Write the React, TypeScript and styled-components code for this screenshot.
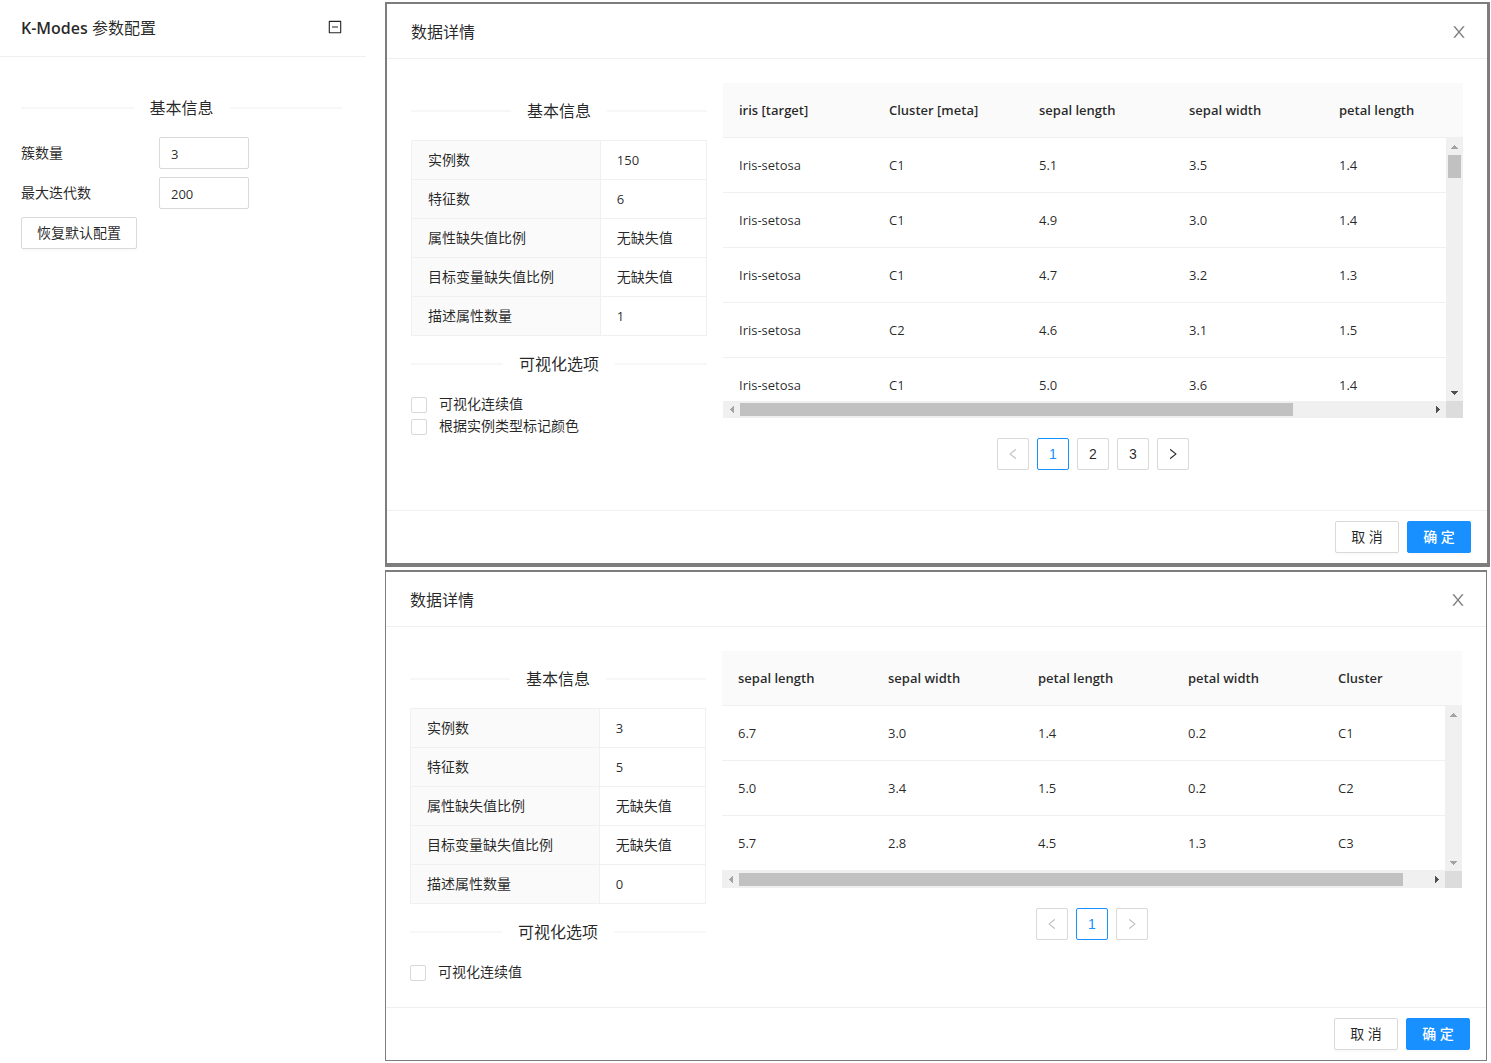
import React from 'react';
import styled, { createGlobalStyle } from 'styled-components';

const sans = '"Open Sans", "Noto Sans CJK SC", sans-serif';
const line = '#f0f0f0';
const control = '#d9d9d9';
const ink = 'rgba(0, 0, 0, 0.85)';
const primary = '#1890ff';

const GlobalStyle = createGlobalStyle`
  *, *::before, *::after { box-sizing: border-box; }
  body {
    margin: 0;
    background: #fff;
    color: ${ink};
    font: 14px/22px ${sans};
  }
  button, input { font: inherit; color: inherit; }
`;

const Page = styled.div`
  display: flex;
  align-items: flex-start;
  gap: 19px;
`;

/* ---------- shared parts ---------- */

const Divider = styled.h3`
  display: flex;
  align-items: center;
  gap: 16px;
  margin: 16px 0 17px;
  font-size: 16px;
  font-weight: 400;
  line-height: 24px;
  white-space: nowrap;
  &::before, &::after {
    content: '';
    flex: 1;
    height: 2px;
    background: #f7f7f7;
  }
`;

const Button = styled.button<{ $primary?: boolean }>`
  height: 32px;
  padding: 0 15px;
  border: 1px solid ${p => (p.$primary ? primary : control)};
  border-radius: 2px;
  background: ${p => (p.$primary ? primary : '#fff')};
  color: ${p => (p.$primary ? '#fff' : ink)};
  font-weight: ${p => (p.$primary ? 500 : 400)};
  line-height: 22px;
  box-shadow: 0 2px 0 rgba(0, 0, 0, 0.02);
  cursor: pointer;
`;

const IconButton = styled.button`
  display: flex;
  align-items: center;
  justify-content: center;
  height: 22px;
  padding: 0;
  border: 0;
  background: none;
  cursor: pointer;
`;

const Icon = ({ size, paths }: { size: number; paths: string[] }) => (
  <svg width={size} height={size} viewBox="0 0 1024 1024" fill="currentColor" aria-hidden="true">
    {paths.map(d => <path key={d} d={d} />)}
  </svg>
);

const closeIcon = ['M563.8 512l262.5-312.9c4.4-5.2.7-13.1-6.1-13.1h-79.8c-4.7 0-9.2 2.1-12.3 5.7L511.6 449.8 295.1 191.7c-3-3.6-7.5-5.7-12.3-5.7H203c-6.8 0-10.5 7.9-6.1 13.1L459.4 512 196.9 824.9A7.95 7.95 0 00203 838h79.8c4.7 0 9.2-2.1 12.3-5.7l216.5-258.1 216.5 258.1c3 3.6 7.5 5.7 12.3 5.7h79.8c6.8 0 10.5-7.9 6.1-13.1L563.8 512z'];
const leftIcon = ['M724 218.3V141c0-6.7-7.7-10.4-12.9-6.3L260.3 486.8a31.86 31.86 0 000 50.3l450.8 352.1c5.3 4.1 12.9.4 12.9-6.3v-77.3c0-4.9-2.3-9.6-6.1-12.6l-360-281 360-281.1c3.8-3 6.1-7.7 6.1-12.6z'];
const rightIcon = ['M765.7 486.8L314.9 134.7A7.97 7.97 0 00302 141v77.3c0 4.9 2.3 9.6 6.1 12.6l360 281.1-360 281.1c-3.9 3-6.1 7.7-6.1 12.6V883c0 6.7 7.7 10.4 12.9 6.3l450.8-352.1a31.96 31.96 0 000-50.4z'];
const minusSquareIcon = [
  'M328 544h368c4.4 0 8-3.6 8-8v-48c0-4.4-3.6-8-8-8H328c-4.4 0-8 3.6-8 8v48c0 4.4 3.6 8 8 8z',
  'M880 112H144c-17.7 0-32 14.3-32 32v736c0 17.7 14.3 32 32 32h736c17.7 0 32-14.3 32-32V144c0-17.7-14.3-32-32-32zm-40 728H184V184h656v656z',
];

/* ---------- parameter panel ---------- */

const Panel = styled.aside`
  flex: none;
  width: 366px;
`;

const PanelHeader = styled.header`
  display: flex;
  align-items: flex-start;
  justify-content: space-between;
  padding: 16px 23px 16px 21px;
  border-bottom: 1px solid ${line};
`;

const PanelTitle = styled.h2`
  margin: 0;
  font-size: 16px;
  font-weight: 400;
  line-height: 24px;
`;

const TitleLatin = styled.span`
  font-weight: 600;
`;

const PanelBody = styled.div`
  padding: 23px 24px 24px 21px;
`;

const Form = styled.form`
  display: grid;
  gap: 8px;
  justify-items: start;
`;

const Field = styled.div`
  display: grid;
  grid-template-columns: 138px 90px;
  align-items: center;
`;

const Input = styled.input`
  width: 100%;
  height: 32px;
  padding: 5px 11px 3px;
  border: 1px solid ${control};
  border-radius: 2px;
  background: #fff;
  font-size: 13px;
`;

/* ---------- modal ---------- */

const Stack = styled.main`
  flex: 1;
  min-width: 0;
  display: flex;
  flex-direction: column;
  gap: 3px;
  padding: 2px 1px 2px 0;
`;

const Modal = styled.section<{ $frame: 'heavy' | 'light' }>`
  margin-right: ${p => (p.$frame === 'heavy' ? 0 : '3px')};
  border: solid #7d7d7d;
  border-width: ${p => (p.$frame === 'heavy' ? '2px 3px 4px 2px' : '2px 1px 1px 1px')};
  background: #fff;
`;

const ModalHeader = styled.header`
  display: flex;
  align-items: flex-start;
  justify-content: space-between;
  height: 55px;
  padding-left: 24px;
  border-bottom: 1px solid ${line};
`;

const ModalTitle = styled.h2`
  margin: 0;
  font-size: 16px;
  font-weight: 400;
  line-height: 56px;
`;

const CloseButton = styled(IconButton)`
  width: 56px;
  height: 56px;
  color: rgba(0, 0, 0, 0.5);
`;

const ModalBody = styled.div`
  display: grid;
  grid-template-columns: minmax(0, 2fr) minmax(0, 5fr);
  gap: 16px;
  align-items: start;
  padding: 24px;
`;

const ModalFooter = styled.footer`
  display: flex;
  justify-content: flex-end;
  gap: 8px;
  padding: 10px 16px;
  border-top: 1px solid ${line};
`;

const FooterButton = styled(Button)`
  width: 64px;
`;

const Facts = styled.table`
  width: 100%;
  table-layout: fixed;
  border-collapse: collapse;
  th, td {
    height: 39px;
    padding: 0 16px;
    border: 1px solid ${line};
    font-weight: 400;
    text-align: left;
  }
  th {
    width: 64%;
    background: #fafafa;
  }
`;

const Digits = styled.span`
  font-size: 13px;
`;

const Options = styled.div`
  display: grid;
`;

const Option = styled.label`
  display: flex;
  align-items: center;
  gap: 12px;
`;

const Checkbox = styled.input`
  appearance: none;
  width: 16px;
  height: 16px;
  margin: 2px 0 0;
  border: 1px solid ${control};
  border-radius: 2px;
  background: #fff;
  &:checked { background: ${primary}; border-color: ${primary}; }
`;

/* ---------- data grid ---------- */

const GridFrame = styled.div`
  display: grid;
  grid-template-columns: minmax(0, 1fr) 17px;
`;

const HeadView = styled.div`
  grid-column: 1 / -1;
  overflow: hidden;
  background: #fafafa;
  border-bottom: 1px solid ${line};
`;

const BodyView = styled.div<{ $maxHeight?: number }>`
  overflow: hidden;
  max-height: ${p => (p.$maxHeight ? `${p.$maxHeight}px` : 'none')};
`;

const DataTable = styled.table`
  width: 750px;
  table-layout: fixed;
  border-collapse: separate;
  border-spacing: 0;
  font-size: 13px;
  th, td {
    padding: 16px;
    text-align: left;
  }
  th { font-weight: 600; }
  td { border-bottom: 1px solid ${line}; }
`;

const Bar = styled.div<{ $vertical?: boolean }>`
  display: flex;
  flex-direction: ${p => (p.$vertical ? 'column' : 'row')};
  background: ${line};
`;

const Arrow = styled.button<{ $active?: boolean }>`
  flex: none;
  display: flex;
  align-items: center;
  justify-content: center;
  width: 17px;
  height: 17px;
  padding: 0;
  border: 0;
  background: none;
  color: ${p => (p.$active ? '#505050' : '#a3a3a3')};
`;

const Track = styled.div<{ $vertical?: boolean }>`
  flex: 1;
  padding: ${p => (p.$vertical ? '0 2px' : '2px 0')};
`;

const Thumb = styled.div<{ $vertical?: boolean; $size: number }>`
  width: ${p => (p.$vertical ? '13px' : `${p.$size}%`)};
  height: ${p => (p.$vertical ? `${p.$size}%` : '13px')};
  background: #c1c1c1;
`;

const Corner = styled.div`
  background: #dcdcdc;
`;

const tips = {
  up: '0,4 3.5,0 7,4',
  down: '0,0 7,0 3.5,4',
  left: '4,0 4,7 0,3.5',
  right: '0,0 4,3.5 0,7',
};

const Tip = ({ to }: { to: keyof typeof tips }) => {
  const upright = to === 'up' || to === 'down';
  return (
    <svg width={upright ? 7 : 4} height={upright ? 4 : 7} fill="currentColor" shapeRendering="crispEdges" aria-hidden="true">
      <polygon points={tips[to]} />
    </svg>
  );
};

const ScrollBar = ({ vertical, size }: { vertical?: boolean; size: number }) => (
  <Bar $vertical={vertical}>
    <Arrow type="button" aria-label={vertical ? '向上' : '向左'}><Tip to={vertical ? 'up' : 'left'} /></Arrow>
    <Track $vertical={vertical}>{size > 0 && <Thumb $vertical={vertical} $size={size} />}</Track>
    <Arrow type="button" $active={size > 0} aria-label={vertical ? '向下' : '向右'}><Tip to={vertical ? 'down' : 'right'} /></Arrow>
  </Bar>
);

/* ---------- pagination ---------- */

const Pager = styled.nav`
  display: flex;
  justify-content: center;
  gap: 8px;
  margin: 20px 0 16px;
`;

const PageButton = styled(IconButton)<{ $current?: boolean }>`
  width: 32px;
  height: 32px;
  border: 1px solid ${p => (p.$current ? primary : control)};
  border-radius: 2px;
  background: #fff;
  color: ${p => (p.$current ? primary : ink)};
  font: 14px/22px "Liberation Sans", sans-serif;
  &:disabled { color: rgba(0, 0, 0, 0.25); cursor: not-allowed; }
`;

const Pagination = ({ pages }: { pages: number }) => (
  <Pager aria-label="分页">
    <PageButton type="button" disabled aria-label="上一页"><Icon size={14} paths={leftIcon} /></PageButton>
    {Array.from({ length: pages }, (_, i) => (
      <PageButton type="button" key={i} $current={i === 0}>{i + 1}</PageButton>
    ))}
    <PageButton type="button" disabled={pages === 1} aria-label="下一页"><Icon size={14} paths={rightIcon} /></PageButton>
  </Pager>
);

/* ---------- data ---------- */

type Details = {
  frame: 'heavy' | 'light';
  facts: [string, string][];
  options: string[];
  columns: string[];
  rows: string[][];
  scrollY?: number;
  thumbX: number;
  thumbY: number;
  pages: number;
};

const instances: Details = {
  frame: 'heavy',
  facts: [['实例数', '150'], ['特征数', '6'], ['属性缺失值比例', '无缺失值'], ['目标变量缺失值比例', '无缺失值'], ['描述属性数量', '1']],
  options: ['可视化连续值', '根据实例类型标记颜色'],
  columns: ['iris [target]', 'Cluster [meta]', 'sepal length', 'sepal width', 'petal length'],
  rows: [
    ['Iris-setosa', 'C1', '5.1', '3.5', '1.4'],
    ['Iris-setosa', 'C1', '4.9', '3.0', '1.4'],
    ['Iris-setosa', 'C1', '4.7', '3.2', '1.3'],
    ['Iris-setosa', 'C2', '4.6', '3.1', '1.5'],
    ['Iris-setosa', 'C1', '5.0', '3.6', '1.4'],
  ],
  scrollY: 263,
  thumbX: (723 / 900) * 100,
  thumbY: 10,
  pages: 3,
};

const centroids: Details = {
  frame: 'light',
  facts: [['实例数', '3'], ['特征数', '5'], ['属性缺失值比例', '无缺失值'], ['目标变量缺失值比例', '无缺失值'], ['描述属性数量', '0']],
  options: ['可视化连续值'],
  columns: ['sepal length', 'sepal width', 'petal length', 'petal width', 'Cluster'],
  rows: [
    ['6.7', '3.0', '1.4', '0.2', 'C1'],
    ['5.0', '3.4', '1.5', '0.2', 'C2'],
    ['5.7', '2.8', '4.5', '1.3', 'C3'],
  ],
  thumbX: (723 / 750) * 100,
  thumbY: 0,
  pages: 1,
};

const DetailsModal = ({ data }: { data: Details }) => (
  <Modal $frame={data.frame}>
    <ModalHeader>
      <ModalTitle>数据详情</ModalTitle>
      <CloseButton type="button" aria-label="关闭"><Icon size={18} paths={closeIcon} /></CloseButton>
    </ModalHeader>
    <ModalBody>
      <div>
        <Divider>基本信息</Divider>
        <Facts>
          <tbody>
            {data.facts.map(([name, value]) => (
              <tr key={name}>
                <th scope="row">{name}</th>
                <td>{/^\d+$/.test(value) ? <Digits>{value}</Digits> : value}</td>
              </tr>
            ))}
          </tbody>
        </Facts>
        <Divider>可视化选项</Divider>
        <Options>
          {data.options.map(option => (
            <Option key={option}>
              <Checkbox type="checkbox" />
              {option}
            </Option>
          ))}
        </Options>
      </div>
      <div>
        <GridFrame>
          <HeadView>
            <DataTable>
              <thead>
                <tr>{data.columns.map(c => <th key={c} scope="col">{c}</th>)}</tr>
              </thead>
            </DataTable>
          </HeadView>
          <BodyView $maxHeight={data.scrollY}>
            <DataTable>
              <tbody>
                {data.rows.map((row, r) => (
                  <tr key={r}>{row.map((cell, c) => <td key={c}>{cell}</td>)}</tr>
                ))}
              </tbody>
            </DataTable>
          </BodyView>
          <ScrollBar vertical size={data.thumbY} />
          <ScrollBar size={data.thumbX} />
          <Corner />
        </GridFrame>
        <Pagination pages={data.pages} />
      </div>
    </ModalBody>
    <ModalFooter>
      <FooterButton type="button">取 消</FooterButton>
      <FooterButton type="button" $primary>确 定</FooterButton>
    </ModalFooter>
  </Modal>
);

export default function App() {
  return (
    <>
      <GlobalStyle />
      <Page>
        <Panel>
          <PanelHeader>
            <PanelTitle><TitleLatin>K-Modes</TitleLatin> 参数配置</PanelTitle>
            <IconButton type="button" aria-label="收起"><Icon size={16} paths={minusSquareIcon} /></IconButton>
          </PanelHeader>
          <PanelBody>
            <Divider>基本信息</Divider>
            <Form>
              <Field>
                <label htmlFor="clusters">簇数量</label>
                <Input id="clusters" type="text" defaultValue="3" />
              </Field>
              <Field>
                <label htmlFor="iterations">最大迭代数</label>
                <Input id="iterations" type="text" defaultValue="200" />
              </Field>
              <Button type="button">恢复默认配置</Button>
            </Form>
          </PanelBody>
        </Panel>
        <Stack>
          <DetailsModal data={instances} />
          <DetailsModal data={centroids} />
        </Stack>
      </Page>
    </>
  );
}
